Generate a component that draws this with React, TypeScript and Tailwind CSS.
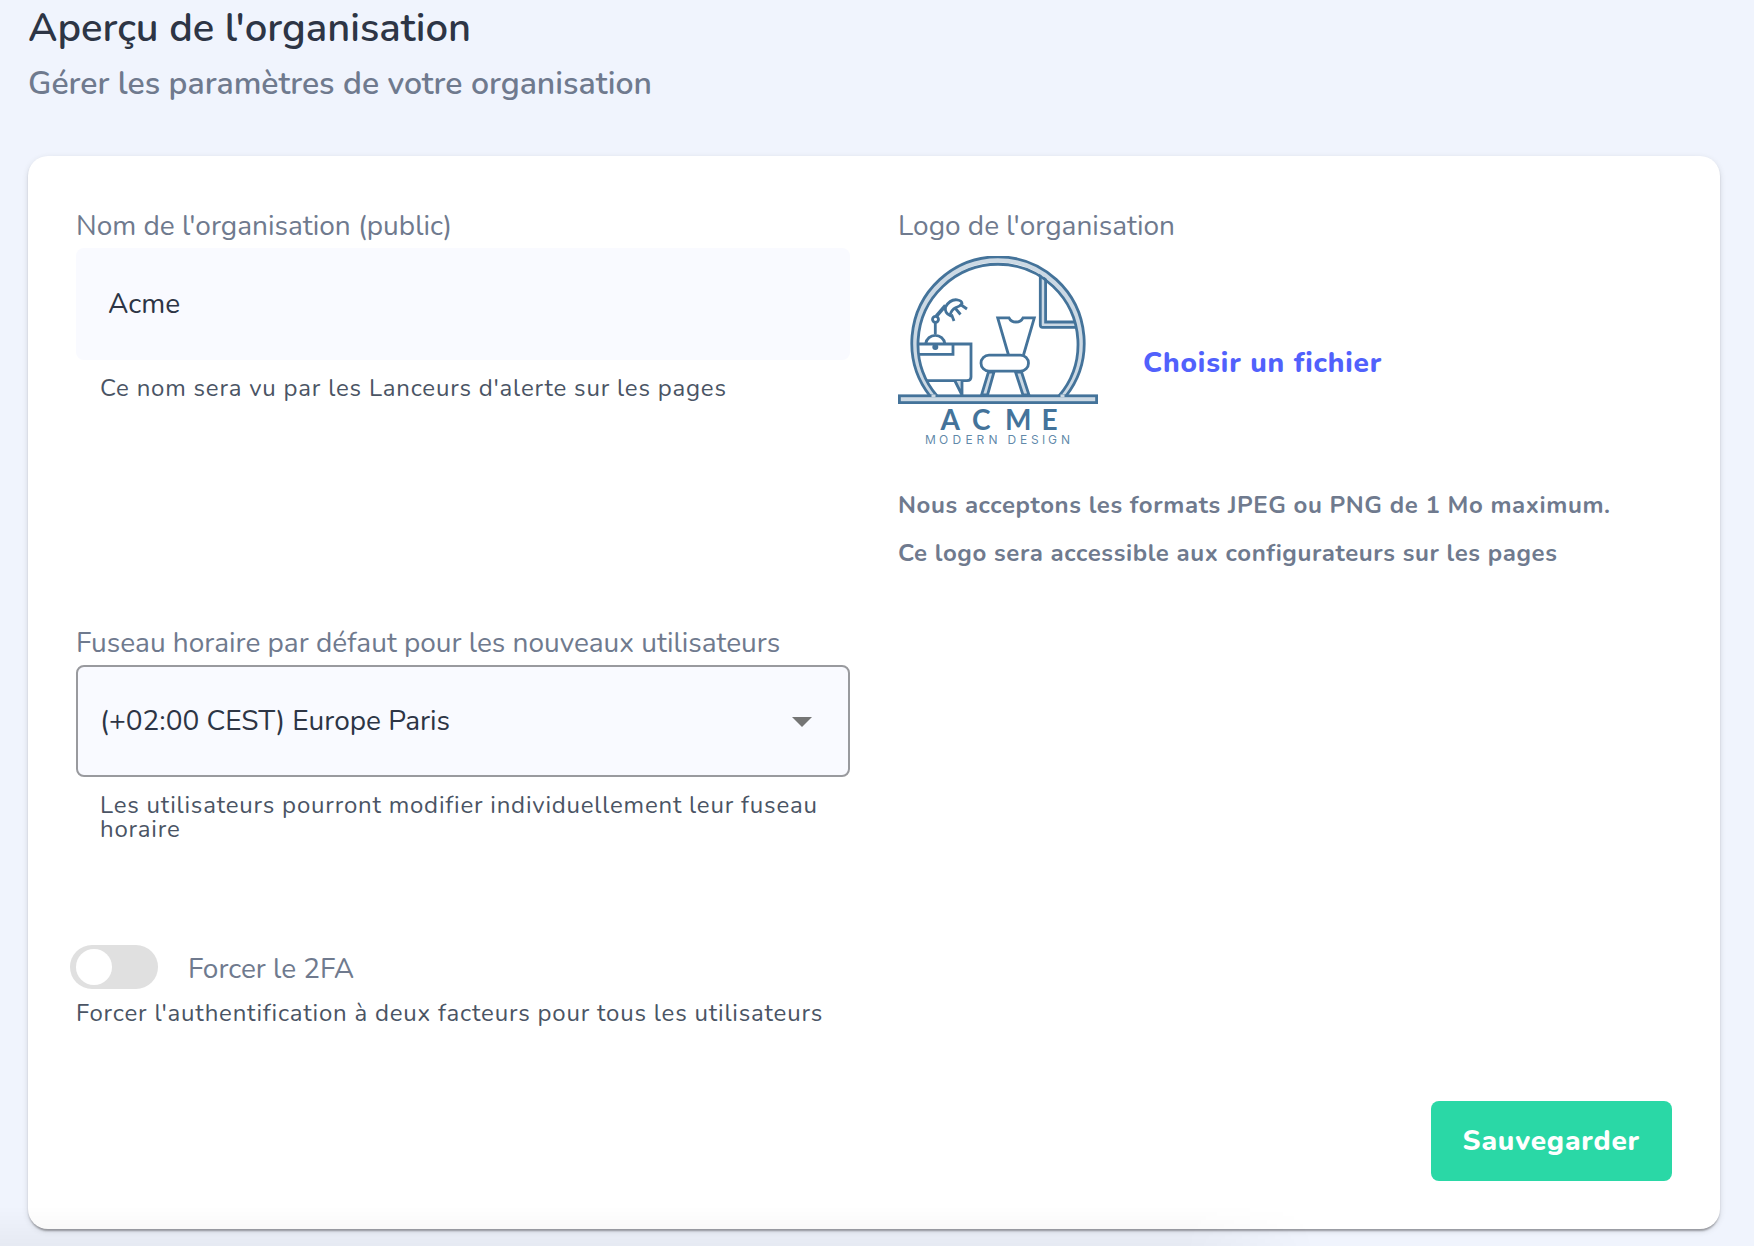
import { ChangeEvent, FormEvent, useState } from "react";

type Organisation = {
  name: string;
  timezone: string;
  force2fa: boolean;
}

const labelClass = "block text-[28px] leading-9 text-[#6f7a8e]"
const helperClass = "text-2xl leading-6 tracking-[0.033em] text-[#4a5464]"

function AcmeLogo() {
  return (
    <svg className="w-[200px] h-[200px] shrink-0" viewBox="0 0 200 200" fill="none" stroke="#44739a" strokeWidth="2.8" role="img" aria-label="Acme Modern Design">
      {/* window */}
      <path d="M142.5 16 V68 Q142.5 71 145.5 71 H178 V66.5 H147.5 V20 Z" fill="#ccd9e4" stroke="none" />
      <path d="M142.3 17 V69 Q142.3 71.3 144.6 71.3 H179" />
      <path d="M147.6 21 V66 H178" />
      {/* arch */}
      <path d="M35.5 140 A83.5 83.5 0 1 1 164.5 140" stroke="#ccd9e4" strokeWidth="6" />
      <path d="M32 140 A86.2 86.2 0 1 1 168 140" />
      <path d="M39 140 A80 80 0 1 1 161 140" />
      {/* floor */}
      <rect x="1.4" y="139.8" width="197.2" height="6.8" fill="#ccd9e4" />
      <path d="M33.5 139.8 H37.5 M162.5 139.8 H166.5" stroke="#ccd9e4" />
      {/* desk */}
      <path d="M20 88 H73 V121 Q73 124.7 69 124.7 H28" />
      <path d="M20 98.3 H55 V88" />
      <path d="M57 125 L64 139 V125" fill="#ccd9e4" />
      <circle cx="37.3" cy="91" r="3" fill="#44739a" stroke="none" />
      {/* lamp */}
      <path d="M27.8 87.5 A9.6 9.6 0 0 1 46.8 87.5 M37.3 78 V67" />
      <circle cx="37.5" cy="63.3" r="3" />
      <path d="M38.5 60 L47.5 49.5" strokeWidth="3.6" />
      <path d="M47.5 51 Q52 43 59 43.8 Q64 44.5 64 47.5 Q62 50.5 58 51.5 Q53 54 52 59.5 Q46.5 57 47.5 51 Z" />
      <path d="M62.5 48.5 L69 53 M57.5 52.5 L62.5 58.5 M53.5 58.5 L56 65" />
      {/* chair */}
      <path d="M110.5 99 L99.7 61.8 H111 Q113 66 118 66 Q123 66 125 61.8 H136.3 L125.5 99" />
      <path d="M90.5 116 L83.5 139 H89.5 L96 116 Z M117.5 116 L125 139 H131 L123.5 116 Z" fill="#ccd9e4" />
      <rect x="83" y="99.2" width="47.5" height="16" rx="8" fill="#fff" />
      <g fill="#44739a" stroke="none">
        <text y="174" className="font-[Lato,sans-serif] text-[28px] font-bold" x="42.5 74 107 143.5">ACME</text>
        <text y="188" fillOpacity="0.85" className="font-[Inter,sans-serif] text-[12px]" x="27 41 54.5 67.5 78.5 90.5 103 109.5 122 133 144 150 163">MODERN DESIGN</text>
      </g>
    </svg>
  )
}

export default function App() {
  const [organisation, setOrganisation] = useState<Organisation>({
    name: "Acme",
    timezone: "Europe/Paris",
    force2fa: false,
  })

  const onChangeData = (e: ChangeEvent<HTMLInputElement | HTMLSelectElement>) => {
    const { name, value } = e.target;
    setOrganisation((prev) => ({
      ...prev,
      [name]: value
    }))
  }

  const onChangeForce2fa = (e: ChangeEvent<HTMLInputElement>) => {
    const { checked } = e.target;
    setOrganisation((prev) => ({
      ...prev,
      force2fa: checked
    }))
  }

  const onSubmitData = (e: FormEvent<HTMLFormElement>) => {
    e.preventDefault()
  }

  return (
    <div className="relative min-h-screen bg-[#f0f4fd] pl-7 pr-[34px] pb-4 font-[Nunito,sans-serif]">
      <h1 className="text-[40px] leading-14 font-semibold text-[#2d3545]">Aperçu de l'organisation</h1>
      <p className="text-[32px] leading-14 font-semibold text-[#6f7a8e]">Gérer les paramètres de votre organisation</p>

      <form className="mt-11 bg-white rounded-[20px] p-12 shadow-[0_4px_2px_-2px_rgba(0,0,0,0.2),0_2px_2px_rgba(0,0,0,0.14),0_2px_6px_rgba(0,0,0,0.12)]" onSubmit={onSubmitData}>
        <div className="grid grid-cols-2 gap-x-12">
          <div className="pt-1">
            <label className={labelClass} htmlFor="name">Nom de l'organisation (public)</label>
            <input className="mt-1 w-full h-28 rounded-lg bg-[#f9faff] px-8 text-[28px] text-[#2d3545]" id="name" name="name" type="text"
              onChange={onChangeData}
              value={organisation.name}
            />
            <p className={`mt-4 px-6 ${helperClass}`}>Ce nom sera vu par les Lanceurs d'alerte sur les pages</p>
          </div>

          <div className="pt-1">
            <span className={labelClass}>Logo de l'organisation</span>
            <div className="mt-3 flex items-center gap-[45px]">
              <AcmeLogo />
              <label className="mt-3.5 cursor-pointer text-[28px] leading-8 font-extrabold tracking-[0.03em] text-[#5161fc]" htmlFor="logo">
                Choisir un fichier
                <input className="sr-only" id="logo" name="logo" type="file" accept="image/jpeg,image/png" />
              </label>
            </div>
            <div className="mt-[25px] text-2xl leading-12 font-bold tracking-wide text-[#6f7a8e]">
              <p>Nous acceptons les formats JPEG ou PNG de 1 Mo maximum.</p>
              <p>Ce logo sera accessible aux configurateurs sur les pages</p>
            </div>
          </div>

          <div className="mt-12">
            <label className={labelClass} htmlFor="timezone">Fuseau horaire par défaut pour les nouveaux utilisateurs</label>
            <div className="relative mt-1">
              <select className="appearance-none w-full h-28 rounded-lg border-2 border-[#999a9e] bg-[#f9faff] px-[22px] text-[28px] text-[#2d3545]" id="timezone" name="timezone"
                onChange={onChangeData}
                value={organisation.timezone}>
                <option value="Europe/Paris">(+02:00 CEST) Europe Paris</option>
                <option value="Europe/London">(+01:00 BST) Europe London</option>
              </select>
              <svg className="pointer-events-none absolute right-6 top-8 size-12" viewBox="0 0 24 24" fill="#757575">
                <path d="M7 10l5 5 5-5z" />
              </svg>
            </div>
            <p className={`mt-4 px-6 ${helperClass}`}>Les utilisateurs pourront modifier individuellement leur fuseau horaire</p>
          </div>
        </div>

        <div className="mt-26 w-1/2">
          <div className="-ml-1.5 flex items-center gap-[30px]">
            <span className="relative h-11 w-[88px]">
              <input className="peer block h-full w-full appearance-none cursor-pointer rounded-full bg-[#e0e0e0] checked:bg-[#2ad8a6]" id="force2fa" name="force2fa" type="checkbox" role="switch"
                onChange={onChangeForce2fa}
                checked={organisation.force2fa}
              />
              <span className="pointer-events-none absolute left-1.5 top-1 size-9 rounded-full bg-white peer-checked:left-[46px]"></span>
            </span>
            <label className={`pt-1 ${labelClass}`} htmlFor="force2fa">Forcer le 2FA</label>
          </div>
          <p className={`mt-3 whitespace-nowrap ${helperClass}`}>Forcer l'authentification à deux facteurs pour tous les utilisateurs</p>
        </div>

        <div className="mt-[76px] flex justify-end">
          <button className="h-20 rounded-lg bg-[#2ad8a6] px-8 text-[28px] font-extrabold tracking-[0.03em] text-white" type="submit">
            Sauvegarder
          </button>
        </div>
      </form>
      {/* shade at the foot of the page, fades out before the save button */}
      <div className="pointer-events-none absolute left-0 bottom-0 h-10 w-3/4 bg-linear-to-b from-transparent to-black/4 mask-r-from-90%"></div>
    </div>
  )
}
